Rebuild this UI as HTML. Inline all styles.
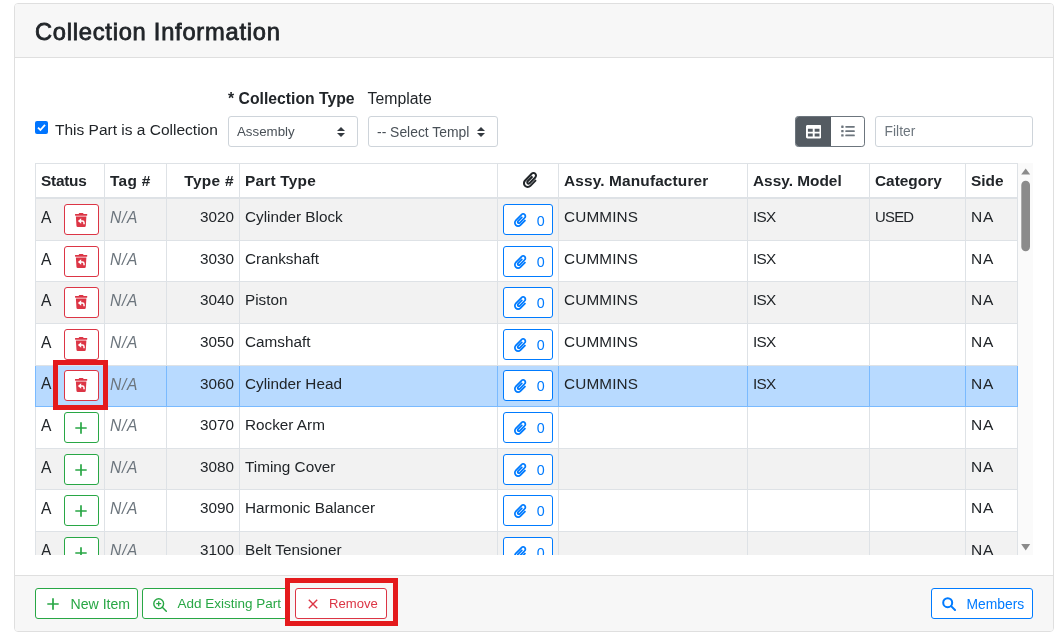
<!DOCTYPE html>
<html lang="en">
<head>
<meta charset="utf-8">
<title>Collection Information</title>
<style>
*{box-sizing:border-box}
html,body{margin:0;padding:0}
body{width:1061px;height:633px;overflow:hidden;background:#fff;font-family:"Liberation Sans",sans-serif;font-size:15.3px;color:#212529;position:relative}
#w{position:absolute;left:0;top:0;width:1061px;height:633px;will-change:transform}
.abs{position:absolute}
.card{position:absolute;left:14px;top:3px;width:1040px;height:629px;border:1px solid #dfdfdf;border-radius:4px;background:#fff}
.card-header{position:absolute;left:0;top:0;width:1038px;height:54px;background:#f7f7f7;border-bottom:1px solid #dfdfdf;border-radius:3px 3px 0 0}
.card-footer{position:absolute;left:0;top:571px;width:1038px;height:56px;background:#f7f7f7;border-top:1px solid #dfdfdf;border-radius:0 0 3px 3px}
h4{position:absolute;margin:0;left:35px;top:18.3px;font-size:23.7px;font-weight:normal;-webkit-text-stroke:.8px #212529;letter-spacing:.75px;line-height:28px;white-space:nowrap;color:#212529}
.lbl{position:absolute;white-space:nowrap;line-height:24px}
.sel{position:absolute;height:31px;width:130px;border:1px solid #ced4da;border-radius:3px;background:#fff;font-size:13.3px;line-height:30.6px;padding-left:8px;color:#495057;white-space:nowrap;overflow:hidden}
.sel svg{position:absolute;right:12px;top:10px}
.btn{position:absolute;height:31px;border:1px solid;border-radius:3px;background:#fff;font-size:13px;line-height:30.4px;white-space:nowrap}
.g{color:#28a745;border-color:#28a745}
.r{color:#dc3545;border-color:#dc3545}
.b{color:#007bff;border-color:#007bff}
.hl{position:absolute;border:5px solid #e41a1c}
/* table */
.tw{position:absolute;left:35px;top:163px;width:983px;height:392px;overflow:hidden}
table{border-collapse:collapse;table-layout:fixed;width:983px}
th,td{border:1px solid #dee2e6;padding:4.8px 5px;line-height:24px;vertical-align:top;text-align:left;white-space:nowrap;overflow:hidden;height:42px}
th{font-weight:bold;font-size:15.4px;border-bottom-width:2px;height:34px;vertical-align:bottom;padding-bottom:3.8px}
tbody td{padding-top:6px;padding-bottom:2px}
tbody td.cc,tbody td:first-child{padding-top:4.8px}
tbody tr:first-child td{height:43px;padding-top:6.4px}
tbody tr:nth-child(5) td.cc,tbody tr:nth-child(5) td:first-child{padding-top:3.8px}
tbody tr:nth-child(2) td,tbody tr:nth-child(5) td,tbody tr:nth-child(7) td{height:41px}
tbody tr:first-child td.cc,tbody tr:first-child td:first-child{padding-top:5.8px}
tbody tr:nth-child(odd){background:#f2f2f2}
tbody tr.sel-row{background:#b8daff}
tbody tr.sel-row td{border-color:#7abaff}
td.num,th.num{text-align:right}
th.cc,td.cc{text-align:center;padding-left:0;padding-right:0}
.sa{position:relative;top:-.5px;font-size:15.6px}
.z{margin-left:12.2px;font-size:14.3px;position:relative;top:1.4px;left:.6px}
td.sd{font-size:15.5px;letter-spacing:.7px}
td.us{font-size:14.9px;letter-spacing:-.75px}
td.mo{letter-spacing:-.7px}
td.mf{letter-spacing:.15px}
td.na{font-style:italic;color:#6c757d;font-size:15.6px;letter-spacing:.75px}
td.na span{position:relative;top:.8px}
.ib{display:inline-block;vertical-align:middle;height:31px;border:1px solid;border-radius:3px;background:#fff;font-size:13px;line-height:29px;text-align:center}
.ib svg{vertical-align:middle}
</style>
</head>
<body>
<div id="w">
<div class="card">
  <div class="card-header"></div>
  <div class="card-footer"></div>
</div>
<h4>Collection Information</h4>

<div class="lbl" style="left:228px;top:86.6px;font-weight:bold;font-size:15.75px">* Collection Type</div>
<div class="lbl" style="left:367.6px;top:86.6px;font-size:15.8px">Template</div>
<div class="abs" style="left:35px;top:121px;width:13px;height:13px;border-radius:2px;background:#0075ff">
  <svg width="13" height="13" viewBox="0 0 13 13" style="display:block"><path d="M3 6.6 L5.4 9 L10 3.8" fill="none" stroke="#fff" stroke-width="1.8"/></svg>
</div>
<div class="lbl" style="left:55px;top:118px;font-size:15.5px">This Part is a Collection</div>
<div class="sel" style="left:228px;top:116px">Assembly<svg width="8" height="10" viewBox="0 0 4 5"><path fill="#343a40" d="M2 0L0 2h4zm0 5L0 3h4z"/></svg></div>
<div class="sel" style="left:368px;top:116px;font-size:13.9px">-- Select Templ<svg width="8" height="10" viewBox="0 0 4 5"><path fill="#343a40" d="M2 0L0 2h4zm0 5L0 3h4z"/></svg></div>

<div class="abs" style="left:795px;top:116px;width:70px;height:31px;border:1px solid #6c757d;border-radius:3.2px;background:#fff;overflow:hidden">
  <div class="abs" style="left:-1px;top:-1px;width:36px;height:31px;background:#545b62"></div><svg class="abs" style="left:9.6px;top:6.7px" width="15.400" height="15.400" viewBox="0 0 512 512"><path fill="#fff" d="M464 32H48C21.490 32 0 53.490 0 80v352c0 26.510 21.490 48 48 48h416c26.510 0 48-21.490 48-48V80c0-26.510-21.490-48-48-48zM224 416H64v-96h160v96zm0-160H64v-96h160v96zm224 160H288v-96h160v96zm0-160H288v-96h160v96z"/></svg><svg class="abs" style="left:44.900px;top:7.300px" width="14" height="14" viewBox="0 0 14 14"><g fill="#6c757d"><rect x="0.200" y="1.600" width="2.400" height="2.400" rx=".4"/><rect x="0.200" y="5.900" width="2.400" height="2.400" rx=".4"/><rect x="0.200" y="10.200" width="2.400" height="2.400" rx=".4"/><rect x="4.300" y="1.900" width="9.500" height="1.800" rx=".6"/><rect x="4.300" y="6.200" width="9.500" height="1.800" rx=".6"/><rect x="4.300" y="10.500" width="9.500" height="1.800" rx=".6"/></g></svg>
</div>
<div class="abs" style="left:875px;top:116px;width:158px;height:31px;border:1px solid #ced4da;border-radius:3px;background:#fff;font-size:13.8px;line-height:30.4px;padding-left:8.6px;color:#6c757d">Filter</div>

<div class="abs" style="left:1018px;top:163px;width:15px;height:392px;background:#fafafa">
  <svg class="abs" style="left:0;top:0" width="15" height="392" viewBox="0 0 15 392"><path d="M3.200 11.500L7.700 5.500L12.200 11.500z" fill="#8b8b8b"/><path d="M3.200 381L12.200 381L7.700 387.500z" fill="#8b8b8b"/><rect x="3.300" y="17.700" width="8.700" height="70.500" rx="4.350" fill="#8b8b8b"/></svg>
</div>
<div class="tw">
<table>
<colgroup><col style="width:69px"><col style="width:62px"><col style="width:73px"><col style="width:258px"><col style="width:61px"><col style="width:189px"><col style="width:122px"><col style="width:96px"><col style="width:52px"></colgroup>
<thead><tr><th style="letter-spacing:-.25px">Status</th><th style="letter-spacing:.3px">Tag #</th><th class="num" style="letter-spacing:.35px">Type #</th><th style="letter-spacing:.22px">Part Type</th><th class="cc"><svg width="14" height="16" viewBox="0 0 448 512" style="position:relative;top:2px;left:2px"><path fill="#212529" d="M43.246 466.142c-58.430-60.289-57.341-157.511 1.386-217.581L254.392 34c44.316-45.332 116.351-45.336 160.671 0 43.890 44.894 43.943 117.329 0 162.276L232.214 383.128c-29.855 30.537-78.633 30.111-107.982-.998-28.275-29.970-27.368-77.473 1.452-106.953l143.743-146.835c6.182-6.314 16.312-6.422 22.626-.241l22.861 22.379c6.315 6.182 6.422 16.312.241 22.626L171.427 319.927c-4.932 5.045-5.236 13.428-.648 18.292 4.372 4.634 11.245 4.711 15.688.165l182.849-186.851c19.613-20.062 19.613-52.725-.011-72.798-19.189-19.627-49.957-19.637-69.154 0L90.390 293.295c-34.763 35.560-35.299 93.120-1.191 128.313 34.010 35.093 88.985 35.137 123.058.286l172.060-175.999c6.177-6.319 16.307-6.433 22.626-.256l22.877 22.364c6.319 6.177 6.434 16.307.256 22.626l-172.060 175.998c-59.576 60.938-155.943 60.216-214.770-.485z"/></svg></th><th style="letter-spacing:.15px">Assy. Manufacturer</th><th>Assy. Model</th><th>Category</th><th>Side</th></tr></thead>
<tbody>
<tr><td><span class="sa">A</span><span class="ib r" style="width:35px;margin-left:12.2px"><svg width="12.25" height="14" viewBox="0 0 448 512" style="position:relative;top:-1px;left:.3px"><path fill="#dc3545" d="M432 32H312l-9.400-18.700A24 24 0 0 0 281.100 0H166.800a23.720 23.720 0 0 0-21.400 13.300L136 32H16A16 16 0 0 0 0 48v32a16 16 0 0 0 16 16h416a16 16 0 0 0 16-16V48a16 16 0 0 0-16-16zM53.200 467a48 48 0 0 0 47.900 45h245.800a48 48 0 0 0 47.900-45L416 128H32z"/><path fill="#fff" d="M103 292L226 188V396z"/><path fill="none" stroke="#fff" stroke-width="54" d="M210 292H268Q330 292 330 354V412"/></svg></span></td><td class="na"><span>N/A</span></td><td class="num">3020</td><td>Cylinder Block</td><td class="cc"><span class="ib b" style="width:50px"><svg width="12.250" height="14" viewBox="0 0 448 512" style="position:relative;top:-.5px;left:2.6px"><path fill="#007bff" d="M43.246 466.142c-58.430-60.289-57.341-157.511 1.386-217.581L254.392 34c44.316-45.332 116.351-45.336 160.671 0 43.890 44.894 43.943 117.329 0 162.276L232.214 383.128c-29.855 30.537-78.633 30.111-107.982-.998-28.275-29.970-27.368-77.473 1.452-106.953l143.743-146.835c6.182-6.314 16.312-6.422 22.626-.241l22.861 22.379c6.315 6.182 6.422 16.312.241 22.626L171.427 319.927c-4.932 5.045-5.236 13.428-.648 18.292 4.372 4.634 11.245 4.711 15.688.165l182.849-186.851c19.613-20.062 19.613-52.725-.011-72.798-19.189-19.627-49.957-19.637-69.154 0L90.390 293.295c-34.763 35.560-35.299 93.120-1.191 128.313 34.010 35.093 88.985 35.137 123.058.286l172.060-175.999c6.177-6.319 16.307-6.433 22.626-.256l22.877 22.364c6.319 6.177 6.434 16.307.256 22.626l-172.060 175.998c-59.576 60.938-155.943 60.216-214.770-.485z"/></svg><span class="z">0</span></span></td><td class="mf">CUMMINS</td><td class="mo">ISX</td><td class="us">USED</td><td class="sd">NA</td></tr>
<tr><td><span class="sa">A</span><span class="ib r" style="width:35px;margin-left:12.2px"><svg width="12.25" height="14" viewBox="0 0 448 512" style="position:relative;top:-1px;left:.3px"><path fill="#dc3545" d="M432 32H312l-9.400-18.700A24 24 0 0 0 281.100 0H166.800a23.720 23.720 0 0 0-21.400 13.300L136 32H16A16 16 0 0 0 0 48v32a16 16 0 0 0 16 16h416a16 16 0 0 0 16-16V48a16 16 0 0 0-16-16zM53.200 467a48 48 0 0 0 47.900 45h245.800a48 48 0 0 0 47.900-45L416 128H32z"/><path fill="#fff" d="M103 292L226 188V396z"/><path fill="none" stroke="#fff" stroke-width="54" d="M210 292H268Q330 292 330 354V412"/></svg></span></td><td class="na"><span>N/A</span></td><td class="num">3030</td><td>Crankshaft</td><td class="cc"><span class="ib b" style="width:50px"><svg width="12.250" height="14" viewBox="0 0 448 512" style="position:relative;top:-.5px;left:2.6px"><path fill="#007bff" d="M43.246 466.142c-58.430-60.289-57.341-157.511 1.386-217.581L254.392 34c44.316-45.332 116.351-45.336 160.671 0 43.890 44.894 43.943 117.329 0 162.276L232.214 383.128c-29.855 30.537-78.633 30.111-107.982-.998-28.275-29.970-27.368-77.473 1.452-106.953l143.743-146.835c6.182-6.314 16.312-6.422 22.626-.241l22.861 22.379c6.315 6.182 6.422 16.312.241 22.626L171.427 319.927c-4.932 5.045-5.236 13.428-.648 18.292 4.372 4.634 11.245 4.711 15.688.165l182.849-186.851c19.613-20.062 19.613-52.725-.011-72.798-19.189-19.627-49.957-19.637-69.154 0L90.390 293.295c-34.763 35.560-35.299 93.120-1.191 128.313 34.010 35.093 88.985 35.137 123.058.286l172.060-175.999c6.177-6.319 16.307-6.433 22.626-.256l22.877 22.364c6.319 6.177 6.434 16.307.256 22.626l-172.060 175.998c-59.576 60.938-155.943 60.216-214.770-.485z"/></svg><span class="z">0</span></span></td><td class="mf">CUMMINS</td><td class="mo">ISX</td><td></td><td class="sd">NA</td></tr>
<tr><td><span class="sa">A</span><span class="ib r" style="width:35px;margin-left:12.2px"><svg width="12.25" height="14" viewBox="0 0 448 512" style="position:relative;top:-1px;left:.3px"><path fill="#dc3545" d="M432 32H312l-9.400-18.700A24 24 0 0 0 281.100 0H166.800a23.720 23.720 0 0 0-21.400 13.300L136 32H16A16 16 0 0 0 0 48v32a16 16 0 0 0 16 16h416a16 16 0 0 0 16-16V48a16 16 0 0 0-16-16zM53.200 467a48 48 0 0 0 47.900 45h245.800a48 48 0 0 0 47.900-45L416 128H32z"/><path fill="#fff" d="M103 292L226 188V396z"/><path fill="none" stroke="#fff" stroke-width="54" d="M210 292H268Q330 292 330 354V412"/></svg></span></td><td class="na"><span>N/A</span></td><td class="num">3040</td><td>Piston</td><td class="cc"><span class="ib b" style="width:50px"><svg width="12.250" height="14" viewBox="0 0 448 512" style="position:relative;top:-.5px;left:2.6px"><path fill="#007bff" d="M43.246 466.142c-58.430-60.289-57.341-157.511 1.386-217.581L254.392 34c44.316-45.332 116.351-45.336 160.671 0 43.890 44.894 43.943 117.329 0 162.276L232.214 383.128c-29.855 30.537-78.633 30.111-107.982-.998-28.275-29.970-27.368-77.473 1.452-106.953l143.743-146.835c6.182-6.314 16.312-6.422 22.626-.241l22.861 22.379c6.315 6.182 6.422 16.312.241 22.626L171.427 319.927c-4.932 5.045-5.236 13.428-.648 18.292 4.372 4.634 11.245 4.711 15.688.165l182.849-186.851c19.613-20.062 19.613-52.725-.011-72.798-19.189-19.627-49.957-19.637-69.154 0L90.390 293.295c-34.763 35.560-35.299 93.120-1.191 128.313 34.010 35.093 88.985 35.137 123.058.286l172.060-175.999c6.177-6.319 16.307-6.433 22.626-.256l22.877 22.364c6.319 6.177 6.434 16.307.256 22.626l-172.060 175.998c-59.576 60.938-155.943 60.216-214.770-.485z"/></svg><span class="z">0</span></span></td><td class="mf">CUMMINS</td><td class="mo">ISX</td><td></td><td class="sd">NA</td></tr>
<tr><td><span class="sa">A</span><span class="ib r" style="width:35px;margin-left:12.2px"><svg width="12.25" height="14" viewBox="0 0 448 512" style="position:relative;top:-1px;left:.3px"><path fill="#dc3545" d="M432 32H312l-9.400-18.700A24 24 0 0 0 281.100 0H166.800a23.720 23.720 0 0 0-21.400 13.300L136 32H16A16 16 0 0 0 0 48v32a16 16 0 0 0 16 16h416a16 16 0 0 0 16-16V48a16 16 0 0 0-16-16zM53.200 467a48 48 0 0 0 47.900 45h245.800a48 48 0 0 0 47.900-45L416 128H32z"/><path fill="#fff" d="M103 292L226 188V396z"/><path fill="none" stroke="#fff" stroke-width="54" d="M210 292H268Q330 292 330 354V412"/></svg></span></td><td class="na"><span>N/A</span></td><td class="num">3050</td><td>Camshaft</td><td class="cc"><span class="ib b" style="width:50px"><svg width="12.250" height="14" viewBox="0 0 448 512" style="position:relative;top:-.5px;left:2.6px"><path fill="#007bff" d="M43.246 466.142c-58.430-60.289-57.341-157.511 1.386-217.581L254.392 34c44.316-45.332 116.351-45.336 160.671 0 43.890 44.894 43.943 117.329 0 162.276L232.214 383.128c-29.855 30.537-78.633 30.111-107.982-.998-28.275-29.970-27.368-77.473 1.452-106.953l143.743-146.835c6.182-6.314 16.312-6.422 22.626-.241l22.861 22.379c6.315 6.182 6.422 16.312.241 22.626L171.427 319.927c-4.932 5.045-5.236 13.428-.648 18.292 4.372 4.634 11.245 4.711 15.688.165l182.849-186.851c19.613-20.062 19.613-52.725-.011-72.798-19.189-19.627-49.957-19.637-69.154 0L90.390 293.295c-34.763 35.560-35.299 93.120-1.191 128.313 34.010 35.093 88.985 35.137 123.058.286l172.060-175.999c6.177-6.319 16.307-6.433 22.626-.256l22.877 22.364c6.319 6.177 6.434 16.307.256 22.626l-172.060 175.998c-59.576 60.938-155.943 60.216-214.770-.485z"/></svg><span class="z">0</span></span></td><td class="mf">CUMMINS</td><td class="mo">ISX</td><td></td><td class="sd">NA</td></tr>
<tr class="sel-row"><td><span class="sa">A</span><span class="ib r" style="width:35px;margin-left:12.2px"><svg width="12.25" height="14" viewBox="0 0 448 512" style="position:relative;top:-1px;left:.3px"><path fill="#dc3545" d="M432 32H312l-9.400-18.700A24 24 0 0 0 281.100 0H166.800a23.720 23.720 0 0 0-21.400 13.300L136 32H16A16 16 0 0 0 0 48v32a16 16 0 0 0 16 16h416a16 16 0 0 0 16-16V48a16 16 0 0 0-16-16zM53.200 467a48 48 0 0 0 47.900 45h245.800a48 48 0 0 0 47.900-45L416 128H32z"/><path fill="#fff" d="M103 292L226 188V396z"/><path fill="none" stroke="#fff" stroke-width="54" d="M210 292H268Q330 292 330 354V412"/></svg></span></td><td class="na"><span>N/A</span></td><td class="num">3060</td><td>Cylinder Head</td><td class="cc"><span class="ib b" style="width:50px"><svg width="12.250" height="14" viewBox="0 0 448 512" style="position:relative;top:-.5px;left:2.6px"><path fill="#007bff" d="M43.246 466.142c-58.430-60.289-57.341-157.511 1.386-217.581L254.392 34c44.316-45.332 116.351-45.336 160.671 0 43.890 44.894 43.943 117.329 0 162.276L232.214 383.128c-29.855 30.537-78.633 30.111-107.982-.998-28.275-29.970-27.368-77.473 1.452-106.953l143.743-146.835c6.182-6.314 16.312-6.422 22.626-.241l22.861 22.379c6.315 6.182 6.422 16.312.241 22.626L171.427 319.927c-4.932 5.045-5.236 13.428-.648 18.292 4.372 4.634 11.245 4.711 15.688.165l182.849-186.851c19.613-20.062 19.613-52.725-.011-72.798-19.189-19.627-49.957-19.637-69.154 0L90.390 293.295c-34.763 35.560-35.299 93.120-1.191 128.313 34.010 35.093 88.985 35.137 123.058.286l172.060-175.999c6.177-6.319 16.307-6.433 22.626-.256l22.877 22.364c6.319 6.177 6.434 16.307.256 22.626l-172.060 175.998c-59.576 60.938-155.943 60.216-214.770-.485z"/></svg><span class="z">0</span></span></td><td class="mf">CUMMINS</td><td class="mo">ISX</td><td></td><td class="sd">NA</td></tr>
<tr><td><span class="sa">A</span><span class="ib g" style="width:35px;margin-left:12.2px"><svg width="12" height="12" viewBox="0 0 12 12"><path d="M6 0.300V11.700M0.300 6H11.700" stroke="#28a745" stroke-width="1.700" fill="none"/></svg></span></td><td class="na"><span>N/A</span></td><td class="num">3070</td><td>Rocker Arm</td><td class="cc"><span class="ib b" style="width:50px"><svg width="12.250" height="14" viewBox="0 0 448 512" style="position:relative;top:-.5px;left:2.6px"><path fill="#007bff" d="M43.246 466.142c-58.430-60.289-57.341-157.511 1.386-217.581L254.392 34c44.316-45.332 116.351-45.336 160.671 0 43.890 44.894 43.943 117.329 0 162.276L232.214 383.128c-29.855 30.537-78.633 30.111-107.982-.998-28.275-29.970-27.368-77.473 1.452-106.953l143.743-146.835c6.182-6.314 16.312-6.422 22.626-.241l22.861 22.379c6.315 6.182 6.422 16.312.241 22.626L171.427 319.927c-4.932 5.045-5.236 13.428-.648 18.292 4.372 4.634 11.245 4.711 15.688.165l182.849-186.851c19.613-20.062 19.613-52.725-.011-72.798-19.189-19.627-49.957-19.637-69.154 0L90.390 293.295c-34.763 35.560-35.299 93.120-1.191 128.313 34.010 35.093 88.985 35.137 123.058.286l172.060-175.999c6.177-6.319 16.307-6.433 22.626-.256l22.877 22.364c6.319 6.177 6.434 16.307.256 22.626l-172.060 175.998c-59.576 60.938-155.943 60.216-214.770-.485z"/></svg><span class="z">0</span></span></td><td></td><td></td><td></td><td class="sd">NA</td></tr>
<tr><td><span class="sa">A</span><span class="ib g" style="width:35px;margin-left:12.2px"><svg width="12" height="12" viewBox="0 0 12 12"><path d="M6 0.300V11.700M0.300 6H11.700" stroke="#28a745" stroke-width="1.700" fill="none"/></svg></span></td><td class="na"><span>N/A</span></td><td class="num">3080</td><td>Timing Cover</td><td class="cc"><span class="ib b" style="width:50px"><svg width="12.250" height="14" viewBox="0 0 448 512" style="position:relative;top:-.5px;left:2.6px"><path fill="#007bff" d="M43.246 466.142c-58.430-60.289-57.341-157.511 1.386-217.581L254.392 34c44.316-45.332 116.351-45.336 160.671 0 43.890 44.894 43.943 117.329 0 162.276L232.214 383.128c-29.855 30.537-78.633 30.111-107.982-.998-28.275-29.970-27.368-77.473 1.452-106.953l143.743-146.835c6.182-6.314 16.312-6.422 22.626-.241l22.861 22.379c6.315 6.182 6.422 16.312.241 22.626L171.427 319.927c-4.932 5.045-5.236 13.428-.648 18.292 4.372 4.634 11.245 4.711 15.688.165l182.849-186.851c19.613-20.062 19.613-52.725-.011-72.798-19.189-19.627-49.957-19.637-69.154 0L90.390 293.295c-34.763 35.560-35.299 93.120-1.191 128.313 34.010 35.093 88.985 35.137 123.058.286l172.060-175.999c6.177-6.319 16.307-6.433 22.626-.256l22.877 22.364c6.319 6.177 6.434 16.307.256 22.626l-172.060 175.998c-59.576 60.938-155.943 60.216-214.770-.485z"/></svg><span class="z">0</span></span></td><td></td><td></td><td></td><td class="sd">NA</td></tr>
<tr><td><span class="sa">A</span><span class="ib g" style="width:35px;margin-left:12.2px"><svg width="12" height="12" viewBox="0 0 12 12"><path d="M6 0.300V11.700M0.300 6H11.700" stroke="#28a745" stroke-width="1.700" fill="none"/></svg></span></td><td class="na"><span>N/A</span></td><td class="num">3090</td><td>Harmonic Balancer</td><td class="cc"><span class="ib b" style="width:50px"><svg width="12.250" height="14" viewBox="0 0 448 512" style="position:relative;top:-.5px;left:2.6px"><path fill="#007bff" d="M43.246 466.142c-58.430-60.289-57.341-157.511 1.386-217.581L254.392 34c44.316-45.332 116.351-45.336 160.671 0 43.890 44.894 43.943 117.329 0 162.276L232.214 383.128c-29.855 30.537-78.633 30.111-107.982-.998-28.275-29.970-27.368-77.473 1.452-106.953l143.743-146.835c6.182-6.314 16.312-6.422 22.626-.241l22.861 22.379c6.315 6.182 6.422 16.312.241 22.626L171.427 319.927c-4.932 5.045-5.236 13.428-.648 18.292 4.372 4.634 11.245 4.711 15.688.165l182.849-186.851c19.613-20.062 19.613-52.725-.011-72.798-19.189-19.627-49.957-19.637-69.154 0L90.390 293.295c-34.763 35.560-35.299 93.120-1.191 128.313 34.010 35.093 88.985 35.137 123.058.286l172.060-175.999c6.177-6.319 16.307-6.433 22.626-.256l22.877 22.364c6.319 6.177 6.434 16.307.256 22.626l-172.060 175.998c-59.576 60.938-155.943 60.216-214.770-.485z"/></svg><span class="z">0</span></span></td><td></td><td></td><td></td><td class="sd">NA</td></tr>
<tr><td><span class="sa">A</span><span class="ib g" style="width:35px;margin-left:12.2px"><svg width="12" height="12" viewBox="0 0 12 12"><path d="M6 0.300V11.700M0.300 6H11.700" stroke="#28a745" stroke-width="1.700" fill="none"/></svg></span></td><td class="na"><span>N/A</span></td><td class="num">3100</td><td>Belt Tensioner</td><td class="cc"><span class="ib b" style="width:50px"><svg width="12.250" height="14" viewBox="0 0 448 512" style="position:relative;top:-.5px;left:2.6px"><path fill="#007bff" d="M43.246 466.142c-58.430-60.289-57.341-157.511 1.386-217.581L254.392 34c44.316-45.332 116.351-45.336 160.671 0 43.890 44.894 43.943 117.329 0 162.276L232.214 383.128c-29.855 30.537-78.633 30.111-107.982-.998-28.275-29.970-27.368-77.473 1.452-106.953l143.743-146.835c6.182-6.314 16.312-6.422 22.626-.241l22.861 22.379c6.315 6.182 6.422 16.312.241 22.626L171.427 319.927c-4.932 5.045-5.236 13.428-.648 18.292 4.372 4.634 11.245 4.711 15.688.165l182.849-186.851c19.613-20.062 19.613-52.725-.011-72.798-19.189-19.627-49.957-19.637-69.154 0L90.390 293.295c-34.763 35.560-35.299 93.120-1.191 128.313 34.010 35.093 88.985 35.137 123.058.286l172.060-175.999c6.177-6.319 16.307-6.433 22.626-.256l22.877 22.364c6.319 6.177 6.434 16.307.256 22.626l-172.060 175.998c-59.576 60.938-155.943 60.216-214.770-.485z"/></svg><span class="z">0</span></span></td><td></td><td></td><td></td><td class="sd">NA</td></tr>
</tbody>
</table>
</div>

<div class="btn g" style="left:35px;top:588px;width:103px"><svg class="abs" style="left:11px;top:9px" width="12" height="12" viewBox="0 0 12 12"><path d="M6 0.300V11.700M0.300 6H11.700" stroke="#28a745" stroke-width="1.700" fill="none"/></svg><span class="abs" style="left:34.6px;font-size:14.1px">New Item</span></div>
<div class="btn g" style="left:142px;top:588px;width:147px"><svg class="abs" style="left:10px;top:9px" width="14" height="14" viewBox="0 0 14 14"><g stroke="#28a745" fill="none"><circle cx="5.700" cy="5.700" r="4.900" stroke-width="1.400"/><path d="M9.300 9.300L13.300 13.300" stroke-width="1.500" stroke-linecap="round"/><path d="M5.700 3.200V8.200M3.200 5.700H8.200" stroke-width="1.300"/></g></svg><span class="abs" style="left:34.5px;font-size:13.5px">Add Existing Part</span></div>
<div class="btn r" style="left:295px;top:588px;width:92px"><svg class="abs" style="left:11.500px;top:10px" width="10" height="10" viewBox="0 0 10 10"><path d="M0.800 0.800L9.200 9.200M9.200 0.800L0.800 9.200" stroke="#dc3545" stroke-width="1.400" fill="none"/></svg><span class="abs" style="left:33px;font-size:13.1px">Remove</span></div>
<div class="btn b" style="left:931px;top:588px;width:102px"><svg class="abs" style="left:10px;top:8px" width="14" height="14" viewBox="0 0 14 14"><g stroke="#007bff" fill="none"><circle cx="5.700" cy="5.700" r="4.500" stroke-width="2"/><path d="M9.100 9.100L13 13" stroke-width="2" stroke-linecap="round"/></g></svg><span class="abs" style="left:34.5px;font-size:13.85px">Members</span></div>

<div class="hl" style="left:285px;top:578px;width:113px;height:48px"></div>
<div class="hl" style="left:53px;top:360px;width:55px;height:50px"></div>
</div>
</body>
</html>
